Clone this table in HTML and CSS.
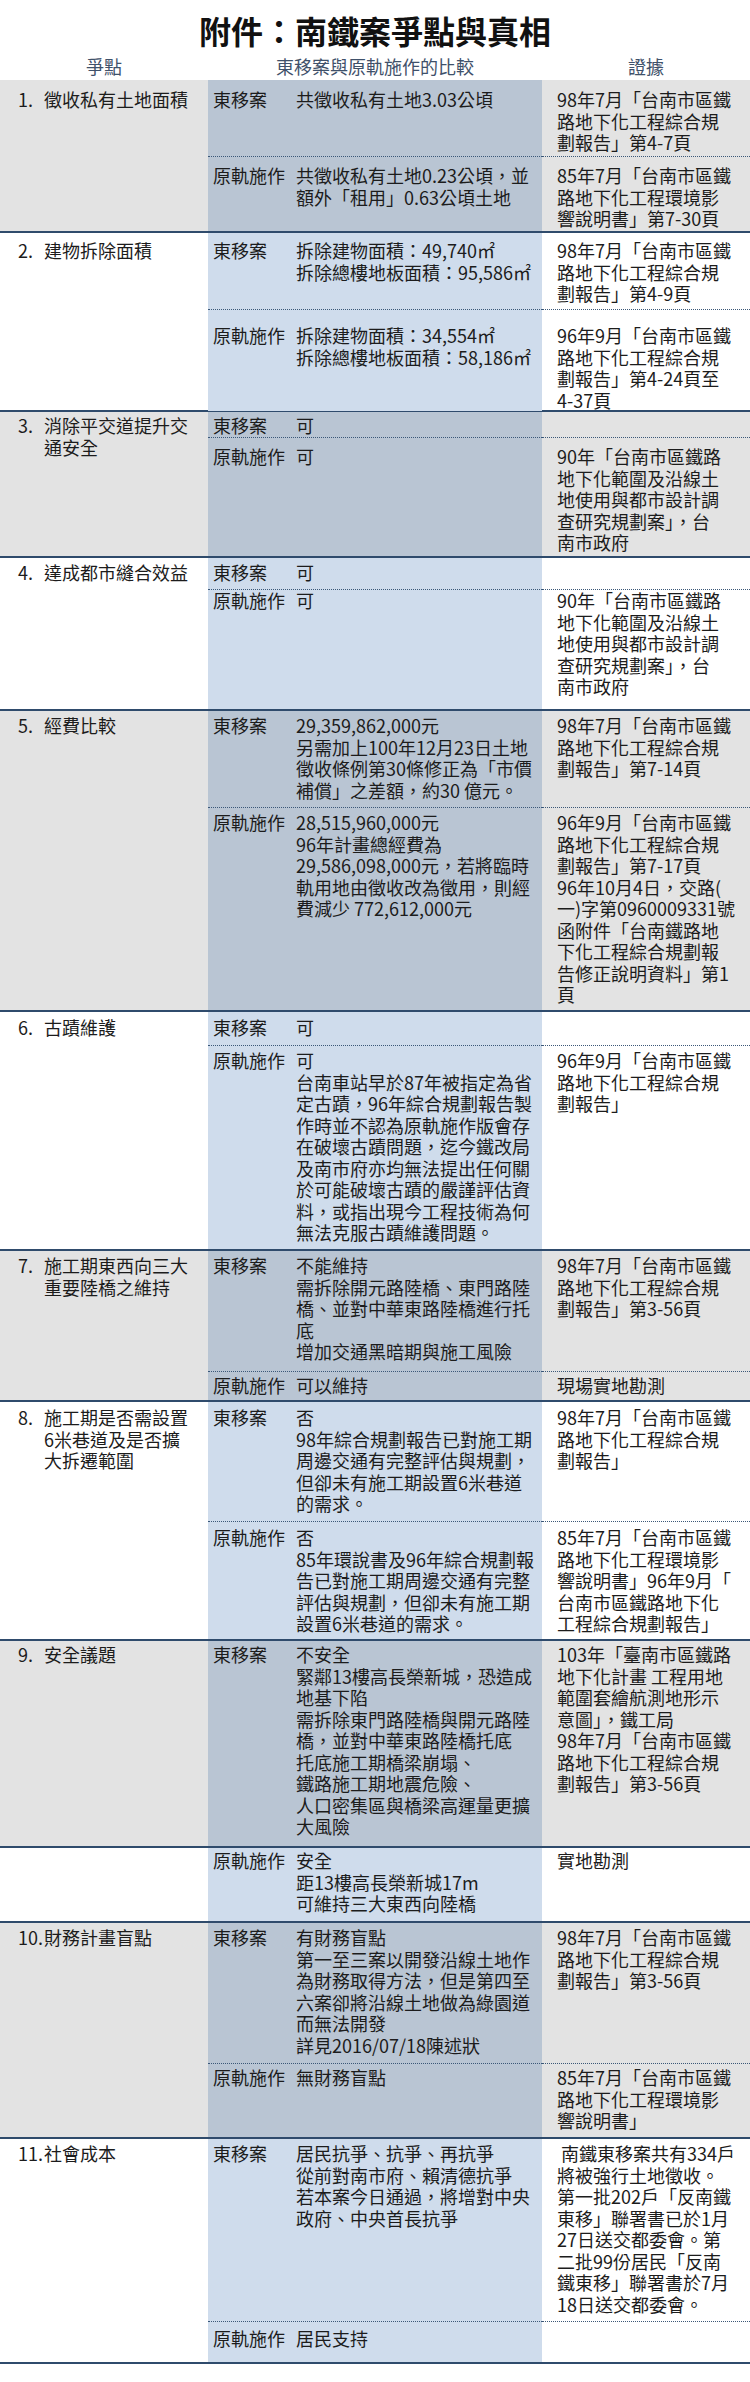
FILE: index.html
```html
<!DOCTYPE html>
<html lang="zh-Hant">
<head>
<meta charset="utf-8">
<title>附件：南鐵案爭點與真相</title>
<link rel="stylesheet" href="styles.css">
</head>
<body>
<div class="page">
  <h1 class="title">附件：南鐵案爭點與真相</h1>
  <div class="head">
    <div>爭點</div>
    <div>東移案與原軌施作的比較</div>
    <div>證據</div>
  </div>

  <div class="row odd r1">
    <div class="topic"><span class="num">1.</span><span class="tt">徵收私有土地面積</span></div>
    <div class="subs">
      <div class="sub s1">
        <div class="cmp"><span class="lab">東移案</span><span class="txt">共徵收私有土地3.03公頃</span></div>
        <div class="ev">98年7月「台南市區鐵<br>路地下化工程綜合規<br>劃報告」第4-7頁</div>
      </div>
      <div class="sub s2">
        <div class="cmp"><span class="lab">原軌施作</span><span class="txt">共徵收私有土地0.23公頃，並<br>額外「租用」0.63公頃土地</span></div>
        <div class="ev">85年7月「台南市區鐵<br>路地下化工程環境影<br>響說明書」第7-30頁</div>
      </div>
    </div>
  </div>

  <div class="row even r2">
    <div class="topic"><span class="num">2.</span><span class="tt">建物拆除面積</span></div>
    <div class="subs">
      <div class="sub s1">
        <div class="cmp"><span class="lab">東移案</span><span class="txt">拆除建物面積：49,740㎡<br>拆除總樓地板面積：95,586㎡</span></div>
        <div class="ev">98年7月「台南市區鐵<br>路地下化工程綜合規<br>劃報告」第4-9頁</div>
      </div>
      <div class="sub s2">
        <div class="cmp"><span class="lab">原軌施作</span><span class="txt">拆除建物面積：34,554㎡<br>拆除總樓地板面積：58,186㎡</span></div>
        <div class="ev">96年9月「台南市區鐵<br>路地下化工程綜合規<br>劃報告」第4-24頁至<br>4-37頁</div>
      </div>
    </div>
  </div>

  <div class="row odd r3">
    <div class="topic"><span class="num">3.</span><span class="tt">消除平交道提升交<br>通安全</span></div>
    <div class="subs">
      <div class="sub s1">
        <div class="cmp"><span class="lab">東移案</span><span class="txt">可</span></div>
        <div class="ev"></div>
      </div>
      <div class="sub s2">
        <div class="cmp"><span class="lab">原軌施作</span><span class="txt">可</span></div>
        <div class="ev">90年「台南市區鐵路<br>地下化範圍及沿線土<br>地使用與都市設計調<br>查研究規劃案」，台<br>南市政府</div>
      </div>
    </div>
  </div>

  <div class="row even r4">
    <div class="topic"><span class="num">4.</span><span class="tt">達成都市縫合效益</span></div>
    <div class="subs">
      <div class="sub s1">
        <div class="cmp"><span class="lab">東移案</span><span class="txt">可</span></div>
        <div class="ev"></div>
      </div>
      <div class="sub s2">
        <div class="cmp"><span class="lab">原軌施作</span><span class="txt">可</span></div>
        <div class="ev">90年「台南市區鐵路<br>地下化範圍及沿線土<br>地使用與都市設計調<br>查研究規劃案」，台<br>南市政府</div>
      </div>
    </div>
  </div>

  <div class="row odd r5">
    <div class="topic"><span class="num">5.</span><span class="tt">經費比較</span></div>
    <div class="subs">
      <div class="sub s1">
        <div class="cmp"><span class="lab">東移案</span><span class="txt">29,359,862,000元<br>另需加上100年12月23日土地<br>徵收條例第30條修正為「市價<br>補償」之差額，約30 億元。</span></div>
        <div class="ev">98年7月「台南市區鐵<br>路地下化工程綜合規<br>劃報告」第7-14頁</div>
      </div>
      <div class="sub s2">
        <div class="cmp"><span class="lab">原軌施作</span><span class="txt">28,515,960,000元<br>96年計畫總經費為<br>29,586,098,000元，若將臨時<br>軌用地由徵收改為徵用，則經<br>費減少 772,612,000元</span></div>
        <div class="ev">96年9月「台南市區鐵<br>路地下化工程綜合規<br>劃報告」第7-17頁<br>96年10月4日，交路(<br>一)字第0960009331號<br>函附件「台南鐵路地<br>下化工程綜合規劃報<br>告修正說明資料」第1<br>頁</div>
      </div>
    </div>
  </div>

  <div class="row even r6">
    <div class="topic"><span class="num">6.</span><span class="tt">古蹟維護</span></div>
    <div class="subs">
      <div class="sub s1">
        <div class="cmp"><span class="lab">東移案</span><span class="txt">可</span></div>
        <div class="ev"></div>
      </div>
      <div class="sub s2">
        <div class="cmp"><span class="lab">原軌施作</span><span class="txt">可<br>台南車站早於87年被指定為省<br>定古蹟，96年綜合規劃報告製<br>作時並不認為原軌施作版會存<br>在破壞古蹟問題，迄今鐵改局<br>及南市府亦均無法提出任何關<br>於可能破壞古蹟的嚴謹評估資<br>料，或指出現今工程技術為何<br>無法克服古蹟維護問題。</span></div>
        <div class="ev">96年9月「台南市區鐵<br>路地下化工程綜合規<br>劃報告」</div>
      </div>
    </div>
  </div>

  <div class="row odd r7">
    <div class="topic"><span class="num">7.</span><span class="tt">施工期東西向三大<br>重要陸橋之維持</span></div>
    <div class="subs">
      <div class="sub s1">
        <div class="cmp"><span class="lab">東移案</span><span class="txt">不能維持<br>需拆除開元路陸橋、東門路陸<br>橋、並對中華東路陸橋進行托<br>底<br>增加交通黑暗期與施工風險</span></div>
        <div class="ev">98年7月「台南市區鐵<br>路地下化工程綜合規<br>劃報告」第3-56頁</div>
      </div>
      <div class="sub s2">
        <div class="cmp"><span class="lab">原軌施作</span><span class="txt">可以維持</span></div>
        <div class="ev">現場實地勘測</div>
      </div>
    </div>
  </div>

  <div class="row even r8">
    <div class="topic"><span class="num">8.</span><span class="tt">施工期是否需設置<br>6米巷道及是否擴<br>大拆遷範圍</span></div>
    <div class="subs">
      <div class="sub s1">
        <div class="cmp"><span class="lab">東移案</span><span class="txt">否<br>98年綜合規劃報告已對施工期<br>周邊交通有完整評估與規劃，<br>但卻未有施工期設置6米巷道<br>的需求。</span></div>
        <div class="ev">98年7月「台南市區鐵<br>路地下化工程綜合規<br>劃報告」</div>
      </div>
      <div class="sub s2">
        <div class="cmp"><span class="lab">原軌施作</span><span class="txt">否<br>85年環說書及96年綜合規劃報<br>告已對施工期周邊交通有完整<br>評估與規劃，但卻未有施工期<br>設置6米巷道的需求。</span></div>
        <div class="ev">85年7月「台南市區鐵<br>路地下化工程環境影<br>響說明書」96年9月「<br>台南市區鐵路地下化<br>工程綜合規劃報告」</div>
      </div>
    </div>
  </div>

  <div class="row odd r9a">
    <div class="topic"><span class="num">9.</span><span class="tt">安全議題</span></div>
    <div class="subs">
      <div class="sub s1">
        <div class="cmp"><span class="lab">東移案</span><span class="txt">不安全<br>緊鄰13樓高長榮新城，恐造成<br>地基下陷<br>需拆除東門路陸橋與開元路陸<br>橋，並對中華東路陸橋托底<br>托底施工期橋梁崩塌、<br>鐵路施工期地震危險、<br>人口密集區與橋梁高運量更擴<br>大風險</span></div>
        <div class="ev">103年「臺南市區鐵路<br>地下化計畫 工程用地<br>範圍套繪航測地形示<br>意圖」，鐵工局<br>98年7月「台南市區鐵<br>路地下化工程綜合規<br>劃報告」第3-56頁</div>
      </div>
    </div>
  </div>

  <div class="row even r9b">
    <div class="topic"></div>
    <div class="subs">
      <div class="sub s1">
        <div class="cmp"><span class="lab">原軌施作</span><span class="txt">安全<br>距13樓高長榮新城17m<br>可維持三大東西向陸橋</span></div>
        <div class="ev">實地勘測</div>
      </div>
    </div>
  </div>

  <div class="row odd r10">
    <div class="topic"><span class="num">10.</span><span class="tt">財務計畫盲點</span></div>
    <div class="subs">
      <div class="sub s1">
        <div class="cmp"><span class="lab">東移案</span><span class="txt">有財務盲點<br>第一至三案以開發沿線土地作<br>為財務取得方法，但是第四至<br>六案卻將沿線土地做為綠園道<br>而無法開發<br>詳見2016/07/18陳述狀</span></div>
        <div class="ev">98年7月「台南市區鐵<br>路地下化工程綜合規<br>劃報告」第3-56頁</div>
      </div>
      <div class="sub s2">
        <div class="cmp"><span class="lab">原軌施作</span><span class="txt">無財務盲點</span></div>
        <div class="ev">85年7月「台南市區鐵<br>路地下化工程環境影<br>響說明書」</div>
      </div>
    </div>
  </div>

  <div class="row even r11">
    <div class="topic"><span class="num">11.</span><span class="tt">社會成本</span></div>
    <div class="subs">
      <div class="sub s1">
        <div class="cmp"><span class="lab">東移案</span><span class="txt">居民抗爭、抗爭、再抗爭<br>從前對南市府、賴清德抗爭<br>若本案今日通過，將增對中央<br>政府、中央首長抗爭</span></div>
        <div class="ev">&nbsp;南鐵東移案共有334戶<br>將被強行土地徵收。<br>第一批202戶「反南鐵<br>東移」聯署書已於1月<br>27日送交都委會。第<br>二批99份居民「反南<br>鐵東移」聯署書於7月<br>18日送交都委會。</div>
      </div>
      <div class="sub s2">
        <div class="cmp"><span class="lab">原軌施作</span><span class="txt">居民支持</span></div>
        <div class="ev"></div>
      </div>
    </div>
  </div>
</div>
</body>
</html>
```

FILE: styles.css
```css
html, body {
  margin: 0;
  padding: 0;
  background: #ffffff;
}

.page {
  width: 750px;
  height: 2382px;
  font-family: "Noto Sans CJK TC", "Noto Sans CJK SC", "Noto Sans", sans-serif;
  font-size: 18px;
  line-height: 21.5px;
  color: #1c1c1c;
  white-space: nowrap;
}

.title {
  margin: 0;
  padding-top: 10px;
  height: 40px;
  line-height: 40px;
  font-size: 32px;
  font-weight: 700;
  text-align: center;
  color: #111111;
}

.head {
  display: grid;
  grid-template-columns: 208px 334px 208px;
  height: 30px;
  box-sizing: border-box;
  padding-top: 2px;
  line-height: 28px;
  text-align: center;
  color: #3f516a;
}

.row {
  display: grid;
  grid-template-columns: 208px 542px;
  border-bottom: 2px solid #2f4b6c;
}

.odd { background: #e3e3e3; }
.even { background: #ffffff; }

.topic {
  display: flex;
  padding-left: 18px;
  padding-top: var(--tp, 4px);
  box-sizing: border-box;
}

.num {
  flex: none;
  width: 26px;
}

.subs {
  display: flex;
  flex-direction: column;
}

.sub {
  display: grid;
  grid-template-columns: 334px 208px;
  box-sizing: border-box;
}

.sub > div {
  box-sizing: border-box;
  padding-top: var(--pt, 4px);
}

.sub + .sub > div {
  border-top: 1px dotted #3b5878;
}

.cmp {
  display: flex;
  padding-left: 5px;
}

.odd .cmp { background: #b9c5d3; }
.even .cmp { background: #cfdcec; }

.lab {
  flex: none;
  width: 83px;
}

.ev {
  padding-left: 15px;
}

/* row geometry */
.r1 { --tp: 9px; }
.r1 .s1 { height: 76px; --pt: 9px; }
.r1 .s2 { height: 75px; --pt: 8px; }

.r2 { --tp: 7px; }
.r2 .s1 { height: 76px; --pt: 7px; }
.r2 .s2 { height: 101px; --pt: 15px; }

.r3 { --tp: 3px; }
.r3 .s1 { height: 25px; --pt: 3px; }
.r3 .s2 { height: 119px; --pt: 8px; }

.r4 { --tp: 4px; }
.r4 .s1 { height: 31px; --pt: 4px; }
.r4 .s2 { height: 120px; --pt: 0px; }

.r5 { --tp: 4px; }
.r5 .s1 { height: 96px; --pt: 4px; }
.r5 .s2 { height: 203px; --pt: 4px; }

.r6 { --tp: 5px; }
.r6 .s1 { height: 33px; --pt: 5px; }
.r6 .s2 { height: 204px; --pt: 4px; }

.r7 { --tp: 4px; }
.r7 .s1 { height: 120px; --pt: 4px; }
.r7 .s2 { height: 29px; --pt: 3px; }

.r8 { --tp: 5px; }
.r8 .s1 { height: 119px; --pt: 5px; }
.r8 .s2 { height: 118px; --pt: 5px; }

.r9a { --tp: 3px; }
.r9a .s1 { height: 205px; --pt: 3px; }

.r9b { --tp: 2px; }
.r9b .s1 { height: 73px; --pt: 2px; }

.r10 { --tp: 4px; }
.r10 .s1 { height: 140px; --pt: 4px; }
.r10 .s2 { height: 74px; --pt: 3px; }

.r11 { --tp: 4px; }
.r11 .s1 { height: 182px; --pt: 4px; }
.r11 .s2 { height: 41px; --pt: 6px; }
```
